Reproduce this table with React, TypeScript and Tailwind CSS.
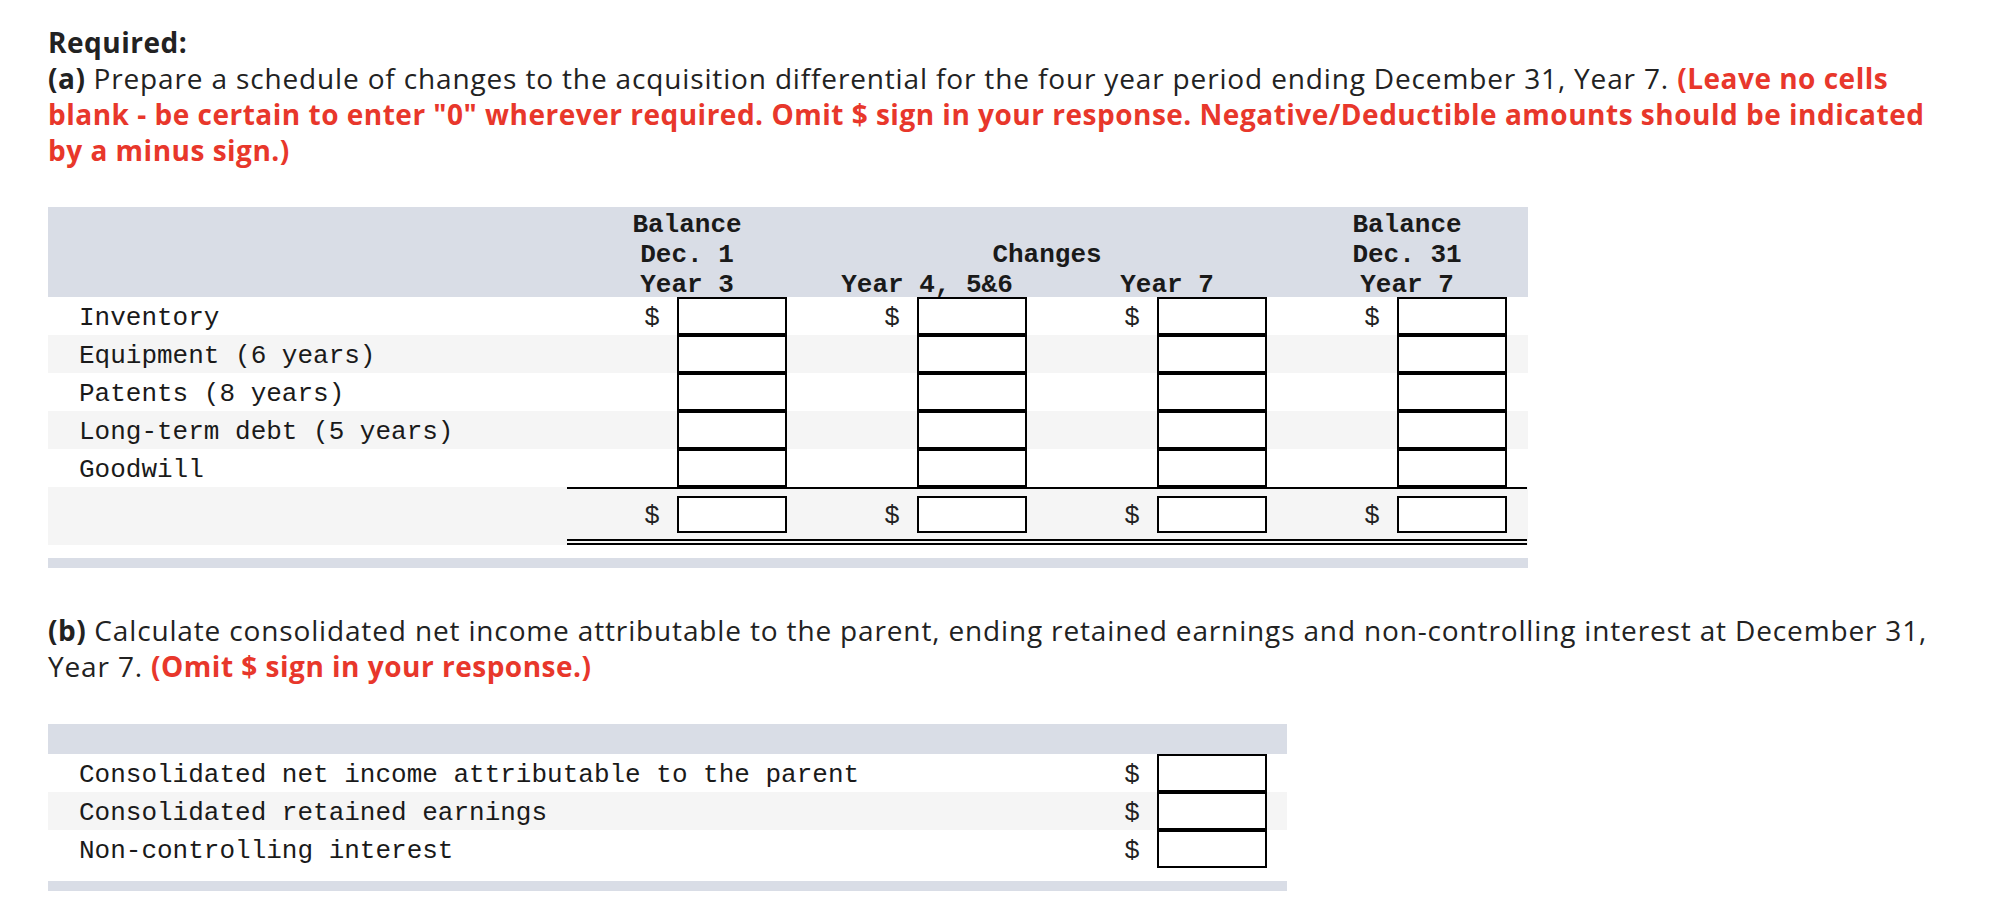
import React from "react";

const mono = "font-['Liberation_Mono','Courier_New',monospace]";
const sans = "font-['Open_Sans',sans-serif]";

function Box({ h = "h-[38px]" }: { h?: string }) {
  return <div className={`w-[110px] ${h} border-2 border-black bg-white shrink-0`} />;
}

function DataCell({ dollar, h }: { dollar: boolean; h?: string }) {
  return (
    <div className="flex items-center pl-[77px] h-full">
      <span className={`w-[16px] pt-[3px] text-center text-[26px] leading-none text-[#222] ${mono}`}>{dollar ? "$" : ""}</span>
      <div className="ml-[17px]">
        <Box h={h} />
      </div>
    </div>
  );
}

const rows1 = [
  "Inventory",
  "Equipment (6 years)",
  "Patents (8 years)",
  "Long-term debt (5 years)",
  "Goodwill",
];

const rows2 = [
  "Consolidated net income attributable to the parent",
  "Consolidated retained earnings",
  "Non-controlling interest",
];

export default function App() {
  return (
    <div className="w-[2010px] h-[906px] bg-white overflow-hidden">
      <div className={`pl-[48px] pt-[24px] ${sans} text-[28px] leading-[36px] text-[#222] tracking-[0.85px]`}>
        <p className="font-bold tracking-[0.5px]">Required:</p>
        <p>
          <span className="font-bold tracking-[0.5px]">(a)</span> Prepare a schedule of changes to the acquisition differential for the four year period ending December 31, Year 7.{" "}
          <span className="font-bold text-[#e8372b] tracking-[0.5px]">
            (Leave no cells
            <br />
            blank - be certain to enter "0" wherever required. Omit $ sign in your response. Negative/Deductible amounts should be indicated
            <br />
            by a minus sign.)
          </span>
        </p>
      </div>

      {/* Table 1 */}
      <div className={`ml-[48px] mt-[39px] w-[1480px] ${mono} text-[#1a1a1a]`}>
        <div className="grid grid-cols-[519px_240px_240px_240px_240px] grid-rows-[30px_30px_30px] bg-[#d9dde6] text-[26px] leading-[30px] font-bold">
          <div className="col-start-2 row-start-1 pt-[3px] text-center">Balance</div>
          <div className="col-start-2 row-start-2 pt-[3px] text-center">Dec. 1</div>
          <div className="col-start-2 row-start-3 pt-[3px] text-center">Year 3</div>
          <div className="col-start-3 col-span-2 row-start-2 pt-[3px] text-center">Changes</div>
          <div className="col-start-3 row-start-3 pt-[3px] text-center">Year 4, 5&amp;6</div>
          <div className="col-start-4 row-start-3 pt-[3px] text-center">Year 7</div>
          <div className="col-start-5 row-start-1 pt-[3px] text-center">Balance</div>
          <div className="col-start-5 row-start-2 pt-[3px] text-center">Dec. 31</div>
          <div className="col-start-5 row-start-3 pt-[3px] text-center">Year 7</div>
        </div>
        {rows1.map((label, i) => (
          <div
            key={label}
            className={`grid grid-cols-[519px_240px_240px_240px_240px] h-[38px] ${i % 2 === 1 ? "bg-[#f5f5f5]" : "bg-white"}`}
          >
            <div className="flex items-center pl-[31px] pt-[4px] text-[26px] leading-none whitespace-pre">{label}</div>
            {[0, 1, 2, 3].map((c) => (
              <DataCell key={c} dollar={i === 0} />
            ))}
          </div>
        ))}
        <div className="grid grid-cols-[519px_240px_240px_240px_240px] h-[58px] bg-[#f5f5f5]">
          <div />
          {[0, 1, 2, 3].map((c) => (
            <div key={c} className="border-t-2 border-b-[6px] border-double border-black">
              <DataCell dollar h="h-[37px]" />
            </div>
          ))}
        </div>
        <div className="h-[13px]" />
        <div className="h-[10px] bg-[#d9dde6]" />
      </div>

      <div className={`pl-[48px] mt-[44px] ${sans} text-[28px] leading-[36px] text-[#222] tracking-[0.85px]`}>
        <p>
          <span className="font-bold tracking-[0.5px]">(b)</span> Calculate consolidated net income attributable to the parent, ending retained earnings and non-controlling interest at December 31,
          <br />
          Year 7. <span className="font-bold text-[#e8372b] tracking-[0.5px]">(Omit $ sign in your response.)</span>
        </p>
      </div>

      {/* Table 2 */}
      <div className={`ml-[48px] mt-[40px] w-[1239px] ${mono} text-[#1a1a1a]`}>
        <div className="h-[30px] bg-[#d9dde6]" />
        {rows2.map((label, i) => (
          <div
            key={label}
            className={`grid grid-cols-[999px_240px] h-[38px] ${i % 2 === 1 ? "bg-[#f5f5f5]" : "bg-white"}`}
          >
            <div className="flex items-center pl-[31px] pt-[4px] text-[26px] leading-none whitespace-pre">{label}</div>
            <DataCell dollar />
          </div>
        ))}
        <div className="h-[13px]" />
        <div className="h-[10px] bg-[#d9dde6]" />
      </div>
    </div>
  );
}
